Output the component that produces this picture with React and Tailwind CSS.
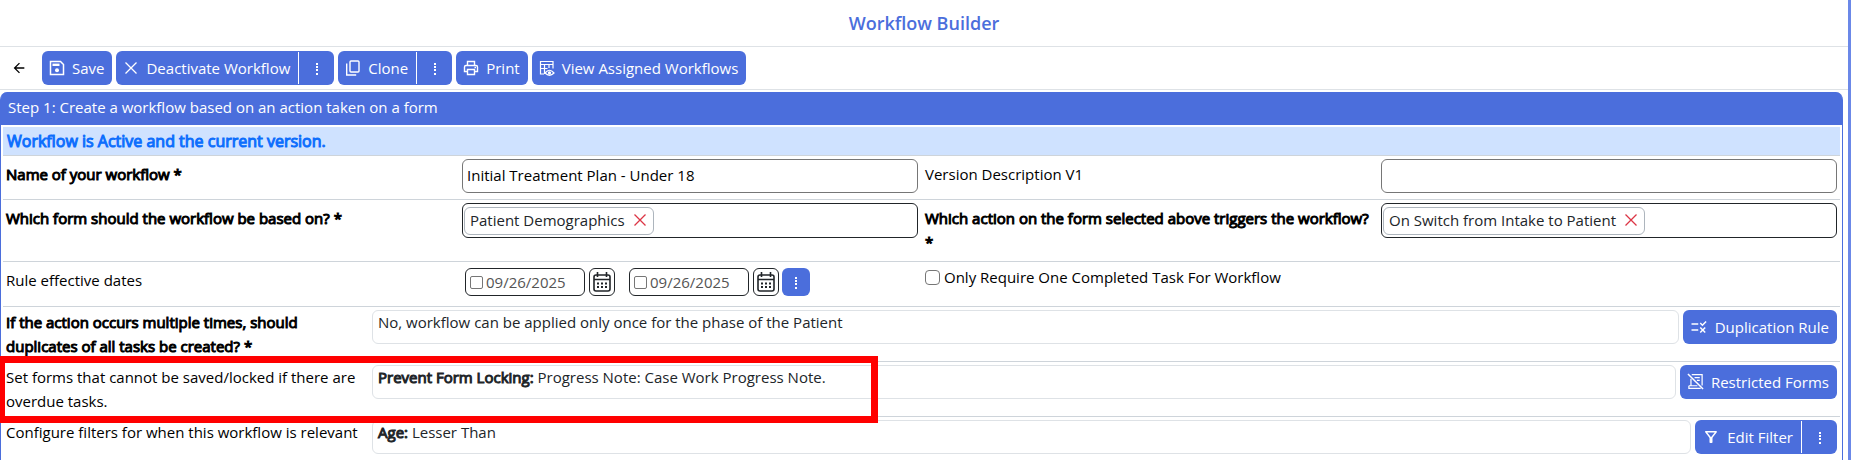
import React, { useState } from 'react';
import { MdArrowBack, MdRule, MdOutlineFilterAlt } from 'react-icons/md';

const btn = 'inline-flex h-[34px] shrink-0 items-center bg-[#4b6edc] text-white whitespace-nowrap cursor-pointer';

// keeps the regular letter widths, only heavier
const strong = 'font-normal [-webkit-text-stroke:1px_currentColor]';

const Dots = () => (
  <svg viewBox="0 0 16 16" className="size-4" fill="currentColor" aria-hidden="true">
    <rect x="7" y="3" width="2" height="2" />
    <rect x="7" y="6" width="2" height="2" />
    <rect x="7" y="9" width="2" height="2" />
    <rect x="7" y="13" width="2" height="2" />
  </svg>
);

const SaveIcon = () => (
  <svg viewBox="0 0 16 16" className="size-4" fill="none" stroke="currentColor" strokeWidth="1.5" aria-hidden="true">
    <path d="M1.5 1.5h10l3 3v10h-13z" />
    <path d="M3.5 4.8h7" strokeWidth="2.4" />
    <circle cx="8" cy="10.2" r="2" fill="currentColor" stroke="none" />
  </svg>
);

const CloseIcon = () => (
  <svg viewBox="0 0 16 16" className="size-4" fill="none" stroke="currentColor" strokeWidth="1.3" aria-hidden="true">
    <path d="M2.5 2.5l11 11M13.5 2.5l-11 11" />
  </svg>
);

const CloneIcon = () => (
  <svg viewBox="0 0 16 16" className="size-4" fill="none" stroke="currentColor" strokeWidth="1.4" aria-hidden="true">
    <rect x="5" y="1" width="9" height="11" rx="1" />
    <path d="M1.7 3.5V15h9.5" />
  </svg>
);

const PrintIcon = () => (
  <svg viewBox="0 0 16 16" className="size-4" fill="none" stroke="currentColor" strokeWidth="1.4" aria-hidden="true">
    <path d="M4.5 5.5v-4h7v4" />
    <path d="M4.5 11.5H1.5V7q0-1.5 1.5-1.5h10q1.5 0 1.5 1.5v4.5h-3" />
    <path d="M4.5 9.5h7v5h-7z" />
    <path d="M11.5 7.5h1.5" />
  </svg>
);

const AssignedIcon = () => (
  <svg viewBox="0 0 16 16" className="size-4" fill="none" stroke="currentColor" strokeWidth="1.2" aria-hidden="true">
    <path d="M5 14H1.5V1.5H14v7M1.5 4.5H14M1.5 8.5h7M5.5 4.5V14M10 4.5V8" />
    <path d="M6 13q4.5-5.5 9 0q-4.5 4.5-9 0z" />
    <circle cx="10.5" cy="12.8" r="1" fill="currentColor" />
  </svg>
);

const RestrictedIcon = () => (
  <svg viewBox="0 0 18 18" className="size-[17px]" fill="none" stroke="currentColor" strokeWidth="1.3" aria-hidden="true">
    <path d="M1 1l16 16" strokeWidth="1.6" />
    <path d="M5 1.8h11v11.5M4.2 6v7.5M2 13.5v2.7h12.5M2 13.5h9" />
    <path d="M8 5h5.5M10.5 7.8h3" />
  </svg>
);

const CalendarIcon = () => (
  <svg viewBox="0 0 18 20" className="h-5 w-[18px]" fill="none" stroke="#212529" strokeWidth="1.6" aria-hidden="true">
    <rect x="1" y="3" width="16" height="16" rx="2" />
    <path d="M1 7.5h16M4.5 0v5M13.5 0v5" />
    <path d="M4 11.5h2M8 11.5h2M12 11.5h2M4 15h2M8 15h2M12 15h2" strokeWidth="2" />
  </svg>
);

const ActionButton = ({ icon, children, menu }) => (
  <div className="flex shrink-0">
    <button type="button" className={`${btn} gap-[7px] pr-2 pl-[7px] pb-px ${menu ? 'rounded-l-md' : 'rounded-md'}`}>
      {icon}
      {children}
    </button>
    {menu && (
      <button type="button" aria-label={menu} className={`${btn} rounded-r-md`}>
        <span className="flex h-8 w-9 items-center justify-center border-l border-white">
          <Dots />
        </span>
      </button>
    )}
  </div>
);

const Tag = ({ children }) => (
  <div className="flex h-[35px] items-center rounded-md border border-[#212529] px-px">
    <span className="flex h-7 items-center gap-[7px] rounded-md border border-[#adb5bd] px-[5px] pb-px text-[#212529]">
      {children}
      <button type="button" aria-label={`Remove ${children}`} className="text-[#dc3545]">
        <CloseIcon />
      </button>
    </span>
  </div>
);

const DateField = ({ label }) => {
  const [checked, setChecked] = useState(false);
  const [date, setDate] = useState('09/26/2025');

  return (
    <div className="flex gap-1">
      <div className="flex h-7 w-[120px] items-center gap-[3px] rounded-md border border-[#212529] px-1">
        <input
          type="checkbox"
          aria-label={`Use ${label}`}
          checked={checked}
          onChange={(e) => setChecked(e.target.checked)}
          className="size-[13px] shrink-0 appearance-none rounded-xs border border-[#767676]"
        />
        <input
          type="text"
          aria-label={label}
          value={date}
          onChange={(e) => setDate(e.target.value)}
          className="w-full min-w-0 pb-px text-[#545454] outline-none"
        />
      </div>
      <button type="button" aria-label={`Pick ${label}`} className="flex h-7 w-[26px] items-center justify-center rounded-md border border-[#212529]">
        <CalendarIcon />
      </button>
    </div>
  );
};

// Two label/field pairs side by side
const FieldRow = ({ height, left, right }) => (
  <div className={`grid grid-cols-2 gap-[7px] border-b border-[#ced4da] px-[3px] pt-[3px] ${height}`}>
    <div className="grid grid-cols-2 items-start">{left}</div>
    <div className="grid grid-cols-2 items-start">{right}</div>
  </div>
);

const RuleRow = ({ label, bold, action, children }) => (
  <div className="flex h-[55px] items-start gap-1 border-b border-[#ced4da] px-[3px] pt-[3px]">
    <p className={`w-[362px] shrink-0 ${bold ? strong : ''}`}>{label}</p>
    <div className="h-[34px] min-w-0 grow rounded-md border border-[#dee2e6] px-[5px] leading-[22px] text-[#212529]">{children}</div>
    {action}
  </div>
);

const App = () => {
  const [name, setName] = useState('Initial Treatment Plan - Under 18');
  const [version, setVersion] = useState('');
  const [onlyOne, setOnlyOne] = useState(false);

  return (
    <div className="flex bg-white font-['Open_Sans',sans-serif] text-[15px] leading-6 text-black">
      <main className="min-w-0 grow">
        <h1 className="flex h-[47px] items-center justify-center border-b border-[#dee2e6] text-lg font-semibold text-[#4b6edc]">
          Workflow Builder
        </h1>

        <div className="flex h-[43px] items-center gap-1 border-b border-[#dee2e6]">
          <button type="button" aria-label="Back" className="flex h-8 w-[38px] items-center justify-center">
            <MdArrowBack className="size-4" />
          </button>
          <ActionButton icon={<SaveIcon />}>Save</ActionButton>
          <ActionButton icon={<CloseIcon />} menu="Deactivate options">Deactivate Workflow</ActionButton>
          <ActionButton icon={<CloneIcon />} menu="Clone options">Clone</ActionButton>
          <ActionButton icon={<PrintIcon />}>Print</ActionButton>
          <ActionButton icon={<AssignedIcon />}>View Assigned Workflows</ActionButton>
        </div>

        <section className="mt-0.5 mr-[5px] rounded-lg border border-t-0 border-[#4b6edc]">
          <h2 className="flex h-[33px] items-center rounded-t-md bg-[#4b6edc] px-[7px] pb-[3px] text-white">
            Step 1: Create a workflow based on an action taken on a form
          </h2>

          <div className="px-0.5 pt-0.5">
            <p className={`flex h-[29px] items-center border-b border-[#ced4da] bg-[#cfe2ff] px-1 text-base text-[#0d6efd] ${strong}`}>
              Workflow is Active and the current version.
            </p>

            <FieldRow
              height="h-11"
              left={
                <>
                  <label htmlFor="name" className={`pt-[3px] ${strong}`}>Name of your workflow *</label>
                  <input
                    id="name"
                    value={name}
                    onChange={(e) => setName(e.target.value)}
                    className="h-[34px] rounded-md border border-[#767676] px-1 pb-0.5"
                  />
                </>
              }
              right={
                <>
                  <label htmlFor="version" className="pt-[3px]">Version Description V1</label>
                  <input
                    id="version"
                    value={version}
                    onChange={(e) => setVersion(e.target.value)}
                    className="h-[34px] rounded-md border border-[#767676] px-1 pb-0.5"
                  />
                </>
              }
            />

            <FieldRow
              height="h-[62px]"
              left={
                <>
                  <p className={`pt-[3px] ${strong}`}>Which form should the workflow be based on? *</p>
                  <Tag>Patient Demographics</Tag>
                </>
              }
              right={
                <>
                  <p className={`pt-[3px] pr-1 ${strong}`}>Which action on the form selected above triggers the workflow? *</p>
                  <Tag>On Switch from Intake to Patient</Tag>
                </>
              }
            />

            <FieldRow
              height="h-[45px]"
              left={
                <>
                  <p className="pt-[3px]">Rule effective dates</p>
                  <div className="flex gap-[14px] px-[3px] pt-[3px]">
                    <DateField label="start date" />
                    <div className="flex gap-[3px]">
                      <DateField label="end date" />
                      <button type="button" aria-label="Date options" className="flex size-7 items-center justify-center rounded-md bg-[#4b6edc] text-white">
                        <Dots />
                      </button>
                    </div>
                  </div>
                </>
              }
              right={
                <label className="col-span-2 flex items-center gap-1">
                  <input
                    type="checkbox"
                    checked={onlyOne}
                    onChange={(e) => setOnlyOne(e.target.checked)}
                    className="size-[15px] appearance-none rounded-sm border border-[#767676]"
                  />
                  Only Require One Completed Task For Workflow
                </label>
              }
            />

            <RuleRow
              bold
              label="If the action occurs multiple times, should duplicates of all tasks be created? *"
              action={<ActionButton icon={<MdRule className="size-[18px]" />}>Duplication Rule</ActionButton>}
            >
              No, workflow can be applied only once for the phase of the Patient
            </RuleRow>
            <div className="relative">
              <RuleRow
                label="Set forms that cannot be saved/locked if there are overdue tasks."
                action={<ActionButton icon={<RestrictedIcon />}>Restricted Forms</ActionButton>}
              >
                <b className={strong}>Prevent Form Locking:</b> Progress Note: Case Work Progress Note.
              </RuleRow>
              <div className="pointer-events-none absolute -inset-y-1.5 -left-[3px] w-[878px] border-7 border-l-5 border-[#ff0000]" />
            </div>
            <RuleRow
              label="Configure filters for when this workflow is relevant"
              action={<ActionButton icon={<MdOutlineFilterAlt className="size-[18px]" />} menu="Filter options">Edit Filter</ActionButton>}
            >
              <b className={strong}>Age:</b> Lesser Than
            </RuleRow>
          </div>
        </section>
      </main>
      <div className="w-[3px] shrink-0 bg-[#6b88e8]" />
    </div>
  );
};

export default App;
